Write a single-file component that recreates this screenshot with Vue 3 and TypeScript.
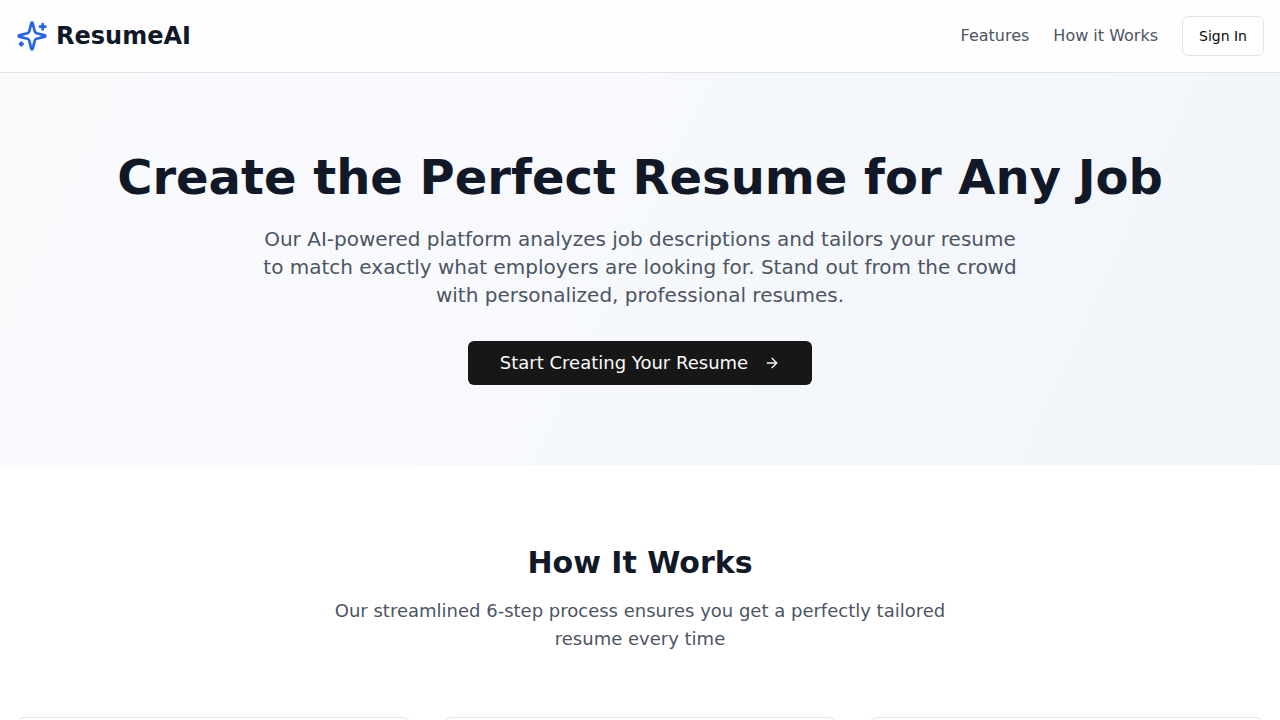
<script setup lang="ts">
interface Step {
  id: number
}

const steps: Step[] = [1, 2, 3].map((id) => ({ id }))
</script>

<template>
  <div class="page">
    <header class="header">
      <div class="container bar">
        <div class="brand">
          <svg class="logo" viewBox="0 0 24 24" aria-hidden="true">
            <path d="M9.937 15.5A2 2 0 0 0 8.5 14.063l-6.135-1.582a.5.5 0 0 1 0-.962L8.5 9.936A2 2 0 0 0 9.937 8.5l1.582-6.135a.5.5 0 0 1 .963 0L14.063 8.5A2 2 0 0 0 15.5 9.937l6.135 1.581a.5.5 0 0 1 0 .964L15.5 14.063a2 2 0 0 0-1.437 1.437l-1.582 6.135a.5.5 0 0 1-.963 0z" />
            <path d="M20 3v4" />
            <path d="M22 5h-4" />
            <path d="M4 17v2" />
            <path d="M5 18H3" />
          </svg>
          <span class="name">ResumeAI</span>
        </div>
        <nav class="nav">
          <a href="#features">Features</a>
          <a href="#how-it-works">How it Works</a>
          <button type="button" class="signin">Sign In</button>
        </nav>
      </div>
    </header>

    <main>
      <section class="hero">
        <div class="container">
          <h1>Create the Perfect Resume for Any Job</h1>
          <p class="lead">
            Our AI-powered platform analyzes job descriptions and tailors your resume to match
            exactly what employers are looking for. Stand out from the crowd with personalized,
            professional resumes.
          </p>
          <button type="button" class="cta">
            Start Creating Your Resume
            <svg class="arrow" viewBox="0 0 24 24" aria-hidden="true">
              <path d="M5 12h14" />
              <path d="m12 5 7 7-7 7" />
            </svg>
          </button>
        </div>
      </section>

      <section id="how-it-works" class="how">
        <div class="container">
          <h2>How It Works</h2>
          <p class="sub">
            Our streamlined 6-step process ensures you get a perfectly tailored resume every time
          </p>
          <div class="grid">
            <article v-for="step in steps" :key="step.id" class="card"></article>
          </div>
        </div>
      </section>
    </main>
  </div>
</template>

<style>
body {
  margin: 0;
}
</style>

<style scoped>
.page,
.page * {
  box-sizing: border-box;
}

.page {
  background: #ffffff;
  color: #0a0a0a;
  font-family: "DejaVu Sans", sans-serif;
  font-size: 16px;
  line-height: 24px;
}

button {
  font-family: inherit;
  cursor: pointer;
}

svg {
  fill: none;
  stroke: currentColor;
  stroke-width: 2;
  stroke-linecap: round;
  stroke-linejoin: round;
  flex-shrink: 0;
}

.container {
  max-width: 1280px;
  margin: 0 auto;
  padding: 0 16px;
}

.header {
  border-bottom: 1px solid #e3e4e5;
  background: #fefefe;
}

.bar {
  display: flex;
  align-items: center;
  justify-content: space-between;
  padding: 16px;
}

.brand {
  display: flex;
  align-items: center;
  gap: 8px;
}

.logo {
  width: 32px;
  height: 32px;
  color: #2563eb;
}

.name {
  color: #111827;
  font-size: 24px;
  font-weight: 700;
  line-height: 32px;
}

.nav {
  display: flex;
  align-items: center;
  gap: 24px;
}

.nav a {
  color: #4b5563;
  text-decoration: none;
}

.signin {
  height: 40px;
  padding: 0 16px;
  border: 1px solid #e5e5e5;
  border-radius: 6px;
  background: #ffffff;
  color: #0a0a0a;
  font-size: 14px;
  line-height: 20px;
}

.hero {
  padding: 80px 0;
  background: linear-gradient(115deg, #f9fafc, #f7f9fc 40%, #f3f6fa 80%, #f3f6f9);
  text-align: center;
}

h1 {
  margin: 0 0 24px;
  color: #111827;
  font-size: 48px;
  font-weight: 700;
  line-height: 48px;
}

.lead {
  max-width: 768px;
  margin: 0 auto 32px;
  color: #4b5563;
  font-size: 20px;
  line-height: 28px;
}

.cta {
  display: inline-flex;
  align-items: center;
  justify-content: center;
  gap: 16px;
  height: 44px;
  padding: 0 32px;
  border: 0;
  border-radius: 6px;
  background: #171717;
  color: #fafafa;
  font-size: 18px;
  line-height: 28px;
  vertical-align: top;
}

.arrow {
  width: 16px;
  height: 16px;
}

.how {
  padding: 80px 0;
  text-align: center;
}

h2 {
  margin: 0 0 16px;
  color: #111827;
  font-size: 30px;
  font-weight: 700;
  line-height: 36px;
}

.sub {
  max-width: 672px;
  margin: 0 auto 64px;
  color: #4b5563;
  font-size: 18px;
  line-height: 28px;
}

.grid {
  display: grid;
  grid-template-columns: repeat(3, 1fr);
  gap: 32px;
}

.card {
  min-height: 240px;
  border: 1px solid #e5e5e5;
  border-radius: 8px;
  background: #ffffff;
}
</style>
